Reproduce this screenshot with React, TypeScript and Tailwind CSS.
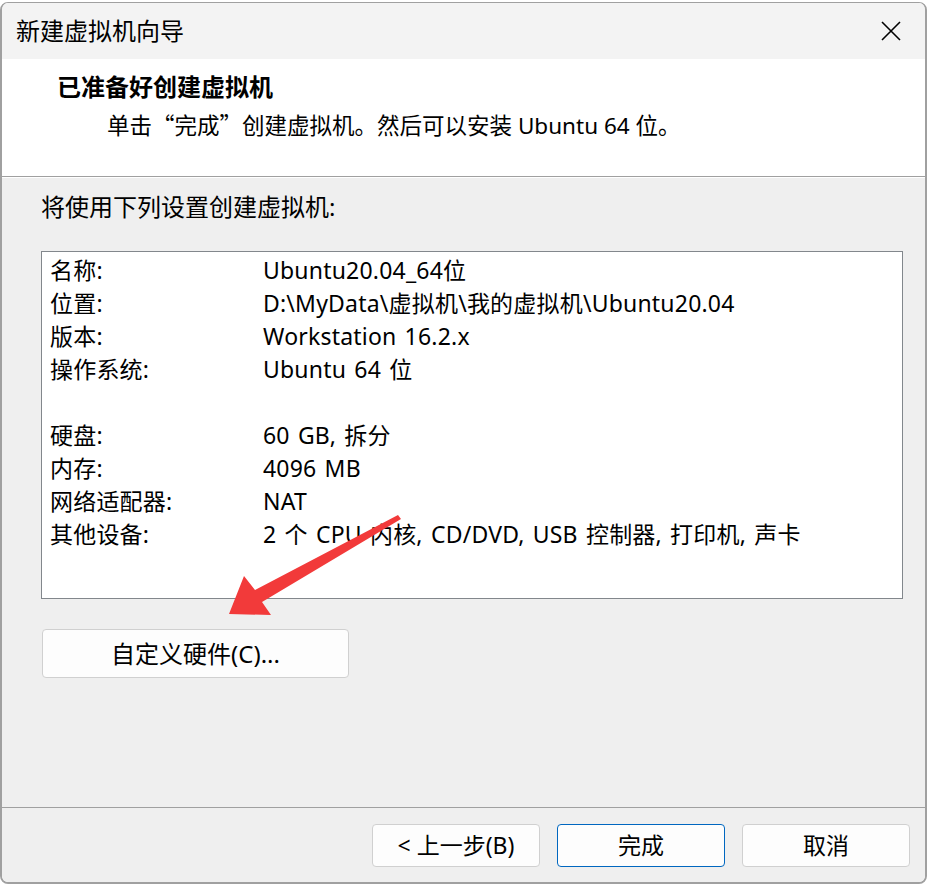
const font = "font-['Noto_Sans','Noto_Sans_CJK_SC',sans-serif]";
const cjk = "font-['Noto_Sans_CJK_SC',sans-serif]";

const rows: [string, string][] = [
  ["名称:", "Ubuntu20.04_64位"],
  ["位置:", "D:\\MyData\\虚拟机\\我的虚拟机\\Ubuntu20.04"],
  ["版本:", "Workstation 16.2.x"],
  ["操作系统:", "Ubuntu 64 位"],
  ["", ""],
  ["硬盘:", "60 GB, 拆分"],
  ["内存:", "4096 MB"],
  ["网络适配器:", "NAT"],
  ["其他设备:", "2 个 CPU 内核, CD/DVD, USB 控制器, 打印机, 声卡"],
];

const FooterButton = ({ label, primary }: { label: string; primary?: boolean }) => (
  <button
    className={
      "h-[43px] w-[168px] rounded-[4px] border bg-[#fdfdfd] text-[23px] text-black " +
      (primary ? "border-[#0067c0]" : "border-[#d0d0d0]")
    }
  >
    {label}
  </button>
);

export default function App() {
  return (
    <div className={`relative h-[884px] w-[927px] overflow-hidden bg-white pt-[2px] ${font}`}>
      <div className="flex h-[882px] flex-col overflow-hidden rounded-[8px] border-2 border-t border-[#a0a0a0]">
        {/* title bar */}
        <div className="flex h-[56px] shrink-0 items-center justify-between bg-[#f3f3f3] pr-[24px] pl-[14px]">
          <span className="text-[24px] text-black">新建虚拟机向导</span>
          <svg width="20" height="20" viewBox="0 0 20 20" className="text-black">
            <path d="M1 1L19 19M19 1L1 19" stroke="currentColor" strokeWidth="1.6" />
          </svg>
        </div>

        {/* header */}
        <div className="h-[118px] shrink-0 border-b border-[#a0a0a0] bg-white pt-[14px] pl-[55px]">
          <div className="text-[24px] leading-[28px] font-bold text-black">已准备好创建虚拟机</div>
          <div className="mt-[9px] pl-[50px] text-[22.5px] leading-[28px] text-black">
            单击<span className={cjk}>“</span>完成<span className={cjk}>”</span>创建虚拟机。然后可以安装 Ubuntu 64 位。
          </div>
        </div>

        {/* body */}
        <div className="flex flex-1 flex-col border-t border-white bg-[#efefef]">
          <div className="flex-1 px-[39px] pt-[15px]">
            <div className="text-[24px] leading-[28px] text-black">将使用下列设置创建虚拟机:</div>
            <div className="mt-[30px] h-[348px] w-[862px] border border-[#82878c] bg-white pt-[2px] pl-[8px]">
              {rows.map(([k, v], i) => (
                <div
                  key={i}
                  className="flex h-[33px] items-center text-[23px] tracking-[0.2px] [word-spacing:2px] text-black"
                >
                  <span className="w-[213px] shrink-0">{k}</span>
                  <span className="whitespace-nowrap">{v}</span>
                </div>
              ))}
            </div>
            <button className="mt-[30px] ml-[1px] h-[49px] w-[307px] rounded-[4px] border border-[#d0d0d0] bg-[#fdfdfd] text-[24px] text-black">
              自定义硬件(C)...
            </button>
          </div>

          {/* footer */}
          <div className="flex h-[75px] shrink-0 items-start justify-end gap-[17px] border-t border-[#a0a0a0] pt-[16px] pr-[15px]">
            <FooterButton label="< 上一步(B)" />
            <FooterButton label="完成" primary />
            <FooterButton label="取消" />
          </div>
        </div>
      </div>

      {/* red annotation arrow */}
      <svg className="pointer-events-none absolute top-0 left-0" width="927" height="884">
        <polygon
          points="229,614 244,576 255,590 398,515 401,519 262,602 271,615"
          fill="#f23a3a"
        />
      </svg>
    </div>
  );
}
